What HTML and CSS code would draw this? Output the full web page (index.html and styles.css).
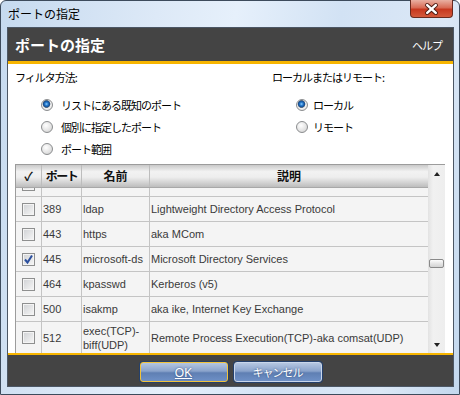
FILE: index.html
```html
<!DOCTYPE html>
<html lang="ja">
<head>
    <meta charset="UTF-8">
    <title>ポートの指定</title>
    <link rel="stylesheet" href="styles.css">
</head>
<body>
    <div class="window">
        <div class="titlebar">
            <span class="title">ポートの指定</span>
            <span class="close">
                <svg width="43" height="18" viewBox="0 0 43 18">
                    <path d="M17 5 L26 13 M26 5 L17 13" stroke="#4a1a12" stroke-width="4.5" stroke-linecap="round"/>
                    <path d="M17 5 L26 13 M26 5 L17 13" stroke="#fff" stroke-width="2.6" stroke-linecap="round"/>
                </svg>
            </span>
        </div>

        <div class="client">
            <div class="header">
                <span class="heading">ポートの指定</span>
                <span class="help">ヘルプ</span>
            </div>

            <div class="content">
                <div class="options">
                    <div class="group filter">
                        <div class="group-label">フィルタ方法:</div>
                        <div class="radios">
                            <div class="radio-row"><span class="radio checked"></span>リストにある既知のポート</div>
                            <div class="radio-row"><span class="radio"></span>個別に指定したポート</div>
                            <div class="radio-row"><span class="radio"></span>ポート範囲</div>
                        </div>
                    </div>
                    <div class="group location">
                        <div class="group-label">ローカルまたはリモート:</div>
                        <div class="radios">
                            <div class="radio-row"><span class="radio checked"></span>ローカル</div>
                            <div class="radio-row"><span class="radio"></span>リモート</div>
                        </div>
                    </div>
                </div>

                <div class="grid">
                    <div class="list">
                        <div class="row head">
                            <div class="cell">✓</div>
                            <div class="cell kana">ポート</div>
                            <div class="cell">名前</div>
                            <div class="cell">説明</div>
                        </div>
                        <div class="rows">
                            <div class="rows-inner">
                                <!-- row scrolled mostly out of view -->
                                <div class="row">
                                    <div class="cell check"><span class="box"></span></div>
                                    <div class="cell"></div>
                                    <div class="cell"></div>
                                    <div class="cell"></div>
                                </div>
                                <div class="row">
                                    <div class="cell check"><span class="box"></span></div>
                                    <div class="cell">389</div>
                                    <div class="cell">ldap</div>
                                    <div class="cell">Lightweight Directory Access Protocol</div>
                                </div>
                                <div class="row">
                                    <div class="cell check"><span class="box"></span></div>
                                    <div class="cell">443</div>
                                    <div class="cell">https</div>
                                    <div class="cell">aka MCom</div>
                                </div>
                                <div class="row">
                                    <div class="cell check">
                                        <span class="box">
                                            <svg width="11" height="11" viewBox="0 0 11 11">
                                                <path d="M2 5.5 L4.5 8.5 L9 1.5" fill="none" stroke="#2b4f9e" stroke-width="2"/>
                                            </svg>
                                        </span>
                                    </div>
                                    <div class="cell">445</div>
                                    <div class="cell">microsoft-ds</div>
                                    <div class="cell">Microsoft Directory Services</div>
                                </div>
                                <div class="row">
                                    <div class="cell check"><span class="box"></span></div>
                                    <div class="cell">464</div>
                                    <div class="cell">kpasswd</div>
                                    <div class="cell">Kerberos (v5)</div>
                                </div>
                                <div class="row">
                                    <div class="cell check"><span class="box"></span></div>
                                    <div class="cell">500</div>
                                    <div class="cell">isakmp</div>
                                    <div class="cell">aka ike, Internet Key Exchange</div>
                                </div>
                                <div class="row tall">
                                    <div class="cell check"><span class="box"></span></div>
                                    <div class="cell">512</div>
                                    <div class="cell">exec(TCP)-<br>biff(UDP)</div>
                                    <div class="cell">Remote Process Execution(TCP)-aka comsat(UDP)</div>
                                </div>
                            </div>
                        </div>
                    </div>
                    <div class="scrollbar">
                        <div class="sb-btn"><span class="arrow-up"></span></div>
                        <div class="sb-track"><div class="thumb"></div></div>
                        <div class="sb-btn"><span class="arrow-down"></span></div>
                    </div>
                </div>
            </div>

            <div class="footer">
                <button class="btn default"><span class="ok">OK</span></button>
                <button class="btn">キャンセル</button>
            </div>
        </div>
    </div>
</body>
</html>
```

FILE: styles.css
```css
body {
    margin: 0;
    font-family: "Noto Sans CJK JP", sans-serif;
}
.window {
    width: 460px;
    height: 395px;
    box-sizing: border-box;
    border: 1px solid #3d4b5c;
    border-radius: 6px 6px 0 0;
    padding-bottom: 7px;
    display: flex;
    flex-direction: column;
    background: linear-gradient(100deg, #c6daef 0%, #dde9f7 30%, #e6f0fb 45%, #d2e2f4 65%, #dce8f6 85%, #c3d8ee 100%);
}
.titlebar {
    height: 26px;
    flex-shrink: 0;
    display: flex;
    justify-content: space-between;
    align-items: flex-start;
}
.title {
    padding: 4px 0 0 7px;
    font-size: 12px;
    line-height: 17px;
    color: #000;
}
.close {
    width: 43px;
    height: 18px;
    margin-right: 6px;
    margin-top: -1px;
    box-sizing: border-box;
    border: 1px solid #6a2a1e;
    border-top: none;
    border-radius: 0 0 4px 4px;
    background: linear-gradient(#e9b0a2, #d86b55 45%, #c7381f 55%, #d45a3c);
    display: flex;
}
.client {
    flex: 1;
    min-height: 0;
    margin: 0 5px 0 6px;
    border: 1px solid #4c5765;
    background: #fff;
    display: flex;
    flex-direction: column;
}
.header {
    height: 33px;
    flex-shrink: 0;
    background: #444;
    border-bottom: 3px solid #f7b500;
    display: flex;
    align-items: center;
    justify-content: space-between;
    padding: 0 11px 0 7px;
    color: #fff;
}
.heading {
    font-size: 15px;
    font-weight: bold;
}
.help {
    font-size: 11px;
    letter-spacing: -1px;
}
.content {
    flex: 1;
    min-height: 0;
    display: flex;
    flex-direction: column;
    padding-left: 7px;
}
.options {
    display: flex;
    padding-top: 6px;
    height: 90px;
    flex-shrink: 0;
}
.filter {
    width: 257px;
}
.group-label,
.radio-row {
    font-size: 11px;
    letter-spacing: -1px;
    color: #000;
}
.group-label {
    line-height: 14px;
}
.radios {
    margin-top: 10px;
}
.radio-row {
    display: flex;
    align-items: center;
    height: 22px;
}
.filter .radio-row {
    padding-left: 26px;
    gap: 8px;
}
.location .radio-row {
    padding-left: 24px;
    gap: 5px;
}
.radio {
    width: 12px;
    height: 12px;
    box-sizing: border-box;
    border-radius: 50%;
    border: 1px solid #8b8d8f;
    background: radial-gradient(circle at 40% 35%, #ffffff, #e2e2e2 60%, #c8c8c8);
}
.radio.checked {
    background: radial-gradient(circle at 45% 40%, #8fd0ff 0, #2c7fd0 1.5px, #114e96 3px, #5b6d80 3.6px, #f2f2f2 4.2px, #d6d6d6);
}
.grid {
    margin-top: 4px;
    width: 429px;
    flex: 1;
    min-height: 0;
    display: flex;
    border-top: 1px solid #9c9c9c;
    border-left: 1px solid #9c9c9c;
    background: #f4f4f4;
    overflow: hidden;
}
.list {
    flex: 1;
    min-width: 0;
    display: flex;
    flex-direction: column;
}
.row {
    display: grid;
    grid-template-columns: 26px 40px 68px 1fr;
    height: 25px;
    box-sizing: border-box;
    border-bottom: 1px solid #c4c4c4;
}
.row.tall {
    height: 32px;
}
.cell {
    display: flex;
    align-items: center;
    padding-left: 1px;
    border-right: 1px solid #c4c4c4;
    font-family: "Liberation Sans", Arial, sans-serif;
    font-size: 11px;
    line-height: 14px;
    color: #3a3a3a;
    white-space: nowrap;
    overflow: hidden;
}
.cell:last-child {
    border-right: none;
}
.head {
    height: 23px;
    flex-shrink: 0;
    border-bottom-color: #a8a8a8;
    background: linear-gradient(#c9c9c9, #f2f2f2 30%, #eeeeee 55%, #bdbdbd);
}
.head .cell {
    justify-content: center;
    padding: 0;
    font-family: "Noto Sans CJK JP", sans-serif;
    font-size: 12px;
    font-weight: bold;
    color: #111;
    border-right-color: #bdbdbd;
}
.head .kana {
    letter-spacing: -1.5px;
}
.rows {
    flex: 1;
    min-height: 0;
    overflow: hidden;
}
.rows-inner {
    margin-top: -16px;
}
.check {
    justify-content: center;
    padding: 0;
}
.box {
    width: 13px;
    height: 13px;
    box-sizing: border-box;
    border: 1px solid #8e8f8f;
    background: linear-gradient(135deg, #cfd1d4, #f7f7f7);
    box-shadow: inset 0 0 0 1px #f4f4f4;
    display: flex;
    align-items: center;
    justify-content: center;
}
.scrollbar {
    width: 17px;
    display: flex;
    flex-direction: column;
    background: linear-gradient(to right, #e2e2e2, #f1f1f1 30%, #eeeeee);
}
.sb-btn {
    height: 17px;
    flex-shrink: 0;
    display: flex;
    align-items: center;
    justify-content: center;
}
.arrow-up {
    border-left: 3.5px solid transparent;
    border-right: 3.5px solid transparent;
    border-bottom: 4px solid #222;
}
.arrow-down {
    border-left: 3.5px solid transparent;
    border-right: 3.5px solid transparent;
    border-top: 4px solid #222;
}
.sb-track {
    flex: 1;
}
.thumb {
    margin: 77px 1px 0 1px;
    height: 9px;
    box-sizing: border-box;
    border: 1px solid #8a8a8a;
    border-radius: 2px;
    background: linear-gradient(#fdfdfd, #e6e6e6 50%, #d3d3d3);
}
.footer {
    height: 24px;
    flex-shrink: 0;
    padding-top: 7px;
    border-top: 2px solid #f7b500;
    background: #444;
    display: flex;
    justify-content: center;
    gap: 6px;
}
.btn {
    width: 88px;
    height: 20px;
    padding: 0;
    box-sizing: border-box;
    border: 1px solid #c9d6ea;
    border-radius: 3px;
    box-shadow: 0 0 0 1px #24406c;
    background: linear-gradient(#b4c6e1, #8aa3cb 45%, #5f7fb3 55%, #6e90c6);
    color: #fff;
    font-family: "Noto Sans CJK JP", sans-serif;
    font-size: 11px;
    letter-spacing: -1px;
    line-height: 16px;
    text-shadow: 0 0 2px #2b4a7a;
}
.btn.default {
    border-color: #f2c33a;
}
.ok {
    font-family: "Liberation Sans", Arial, sans-serif;
    font-size: 12px;
    letter-spacing: 0;
    text-decoration: underline;
}
```
